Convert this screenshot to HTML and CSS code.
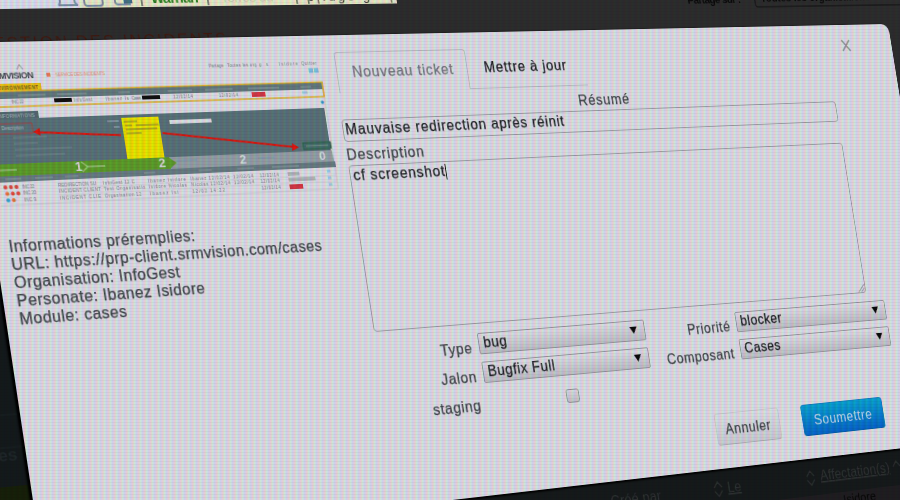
FILE: index.html
```
<!DOCTYPE html>
<html lang="fr">
<head>
<meta charset="utf-8">
<title>Nouveau ticket</title>
<link rel="stylesheet" href="styles.css">
</head>
<body>
<div class="scene">
  <div class="plane">
    <svg class="backdrop" viewBox="-120 -120 1320 760" aria-hidden="true">
      <rect x="-120" y="-120" width="590" height="87" fill="#e2e5f0"/>
      <rect x="122" y="-120" width="348" height="87" fill="#eff0cc"/>
      <g fill="none" stroke="#7f93a8" stroke-width="2">
        <path d="M102 -47v7q0 3 -2 4h20q-3 -1 -3-4v-7"/>
        <path d="M127 -47v9q0 3 3 3h13q3 0 3-3v-9"/>
        <path d="M159 -47v8q0 3 3 3h13"/>
      </g>
      <rect x="168" y="-45" width="9" height="8" fill="#467487"/>
      <g class="strip">
        <text x="185" y="-37">|</text>
        <text x="197" y="-37" class="user" textLength="51">Warrian</text>
        <text x="256" y="-37">|</text>
        <text x="272" y="-37" class="faint" textLength="58">Terres du</text>
        <text x="354" y="-37" textLength="112">| p|.ugo g...|</text>
      </g>
      <text class="heading" x="13" y="7" textLength="258">GESTION DES INCIDENTS</text>
      <text class="share" x="830" y="-28" textLength="71">Partage sur :</text>
      <path d="M920 -60V-26q0 3 3 3H1200" fill="none" stroke="#191919" stroke-width="1.5"/>
      <text class="share" x="928" y="-29" textLength="152">Toutes les organisations</text>
      <rect x="-120" y="180" width="1320" height="258" fill="#141a1c"/>
      <rect x="-120" y="438" width="1320" height="202" fill="#172009"/>
      <rect x="50" y="480" width="1150" height="62" fill="#161a1b"/>
      <rect x="50" y="542" width="1150" height="100" fill="#201e21"/>
      <path d="M-120 368H0M-120 400H0" stroke="#1b2224"/>
      <text class="ghost" x="-34" y="413">res</text>
      <g class="columns">
        <text x="632" y="527" textLength="63">Créé par</text>
        <text x="781" y="527" text-decoration="underline">Le</text>
        <text x="905" y="526" textLength="96" text-decoration="underline">Affectation(s)</text>
        <path d="M764 520l5-6 5 6M764 524l5 6 5-6M887 520l5-6 5 6M887 524l5 6 5-6M1006 520l5-6 5 6" fill="none" stroke="#2c3030" stroke-width="1.5"/>
      </g>
      <text class="owner" x="931" y="556">Isidore</text>
    </svg>

    <section class="dialog">
      <aside class="context">
        <svg class="capture" viewBox="12 10 368 165">
          <path d="M370 66V163H12" fill="none" stroke="#cfd0d5"/>
          <text x="23" y="37" class="brand" textLength="41">RMVISION</text>
          <path d="M48 28l3-5 3 5" fill="none" stroke="#999" stroke-width="1"/>
          <rect x="77" y="32" width="4" height="4" fill="#e8825c"/>
          <text x="86" y="36" class="tiny orange" textLength="51">SERVICE DES INCIDENTS</text>
          <g class="tiny">
            <text x="248" y="31" textLength="16">Partage</text>
            <text x="268" y="31" textLength="32">Toutes les org</text>
            <text x="303" y="31" textLength="10">g  s</text>
            <text x="325" y="31" textLength="21">Isidore</text>
            <text x="350" y="31" textLength="17">Quitter</text>
          </g>
          <path d="M357 37h5M363 37h5" stroke="#82c8de" stroke-width="5"/>
          <rect x="12" y="42" width="58" height="7.500" fill="#f2c615"/>
          <text x="22" y="48" class="tiny dark" textLength="45">ENVIRONNEMENT</text>
          <rect x="12" y="50" width="358" height="7" fill="#667c80"/>
          <path d="M45 54h28M85 54h30M148 54h12M200 54h26M240 54h30M287 54h34M345 54h12" stroke="#839698" stroke-width="1.500"/>
          <path d="M12 49.500H370V65H12" fill="none" stroke="#e1b733" stroke-width="1.700"/>
          <g class="tiny">
            <text x="38" y="62" textLength="12">INC 22</text>
            <text x="101" y="62" textLength="19">InfoGest</text>
            <text x="134" y="62" textLength="24">Ibanez Is</text>
            <text x="161" y="62" textLength="10">Cases</text>
            <text x="205" y="62" textLength="21">12/02/14</text>
            <text x="254" y="62" textLength="21">12/02/14</text>
          </g>
          <rect x="81" y="58" width="18" height="4" fill="#101010"/>
          <rect x="172" y="58" width="19" height="4" fill="#101010"/>
          <rect x="290" y="58" width="15" height="5" fill="#d93847"/>
          <path d="M346 60h6" stroke="#a6d2e2" stroke-width="3"/>
          <circle cx="367" cy="71" r="1.800" fill="#319cc2"/>

          <rect x="12" y="70" width="51" height="9" fill="#566d73"/>
          <rect x="12" y="77" width="356" height="45" fill="#5c757b"/>
          <text x="22" y="76" class="tiny pale" textLength="37">INFORMATIONS</text>
          <text x="24" y="88" class="tiny pale" textLength="22">Description</text>
          <path d="M12 82H55V92H12" fill="none" stroke="#a3474a" stroke-width="1"/>
          <path d="M34 96h34M34 102h24M34 108h58M34 114h50" stroke="#6e858b" stroke-width="1.500"/>
          <path d="M132 83h12M138 89h6" stroke="#8095a0" stroke-width="2"/>
          <rect x="197" y="84" width="45" height="4" fill="#e2e5e7"/>
          <rect x="147" y="80" width="39" height="43" fill="#f0ea00"/>
          <path d="M149 84h14M150 88h7M161 88h24M150 92h33M150 96h16" stroke="#aaa622" stroke-width="1.400"/>
          <rect x="338" y="113" width="31" height="7" fill="#45706b" stroke="#2b6448" stroke-width="1"/>
          <path d="M341 116.500h25" stroke="#6a8c85" stroke-width="1.500"/>

          <rect x="12" y="122" width="180" height="12" fill="#60a02b"/>
          <path d="M191 122H369L370 134H191Z" fill="#98a4a9"/>
          <path d="M190 122l8 6-8 6z" fill="#60a02b"/>
          <path d="M15 128h18M105 128h18" stroke="#8dbd69" stroke-width="2"/>
          <path d="M198 126h22M286 127h18" stroke="#8c9fab" stroke-width="2"/>
          <path d="M99 123l6 5-6 5" fill="none" stroke="#9dcc79" stroke-width="1.500"/>
          <g class="step">
            <text x="92" y="132.500">1</text>
            <text x="179" y="132.500">2</text>
            <text x="266" y="132.500">2</text>
            <text x="354" y="132.500">0</text>
          </g>
          <rect x="12" y="134" width="359" height="6" fill="#6b7f85"/>
          <path d="M20 137h16M50 137h18M80 137h14M162 137h12M220 137h14M262 137h18M300 137h30" stroke="#84979a" stroke-width="1.400"/>
          <g fill="#e04c3e">
            <circle cx="19" cy="145" r="2"/><circle cx="24.500" cy="145" r="2"/><circle cx="30" cy="145" r="2"/>
            <circle cx="20" cy="151.500" r="2" fill="#e9743e"/><circle cx="25.500" cy="151.500" r="2"/><circle cx="31" cy="151.500" r="2"/>
            <circle cx="20" cy="158" r="2" fill="#36a4dc"/><circle cx="25.500" cy="158" r="2" fill="#e9743e"/>
          </g>
          <g class="tiny">
            <text x="36" y="147" textLength="12">INC 22</text><text x="36" y="153.500" textLength="13">INC 20</text><text x="36" y="160" textLength="12">INC 9</text>
            <text x="72" y="147" textLength="39">REDIRECTION SU</text><text x="72" y="153.500" textLength="43">INCIDENT CLIENT</text><text x="72" y="160" textLength="42">INCIDENT CLIE</text>
            <text x="118" y="147" textLength="33">InfoGest 12 C</text><text x="118" y="153.500" textLength="43">Test Organisatio</text><text x="118" y="160" textLength="38">Organisation 12</text>
            <text x="165" y="147" textLength="40">Ibanez Isidore</text><text x="165" y="153.500" textLength="40">Isidore Nicolas</text><text x="165" y="160" textLength="30">Ibanez Isi</text>
            <text x="210" y="147" textLength="42">Ibanez 12/02/14</text><text x="210" y="153.500" textLength="42">Nicolas 12/02/14</text><text x="210" y="160" textLength="35">12/02 14:22</text>
            <text x="256" y="147" textLength="22">12/02/14</text><text x="256" y="153.500" textLength="22">12/02/14</text>
            <text x="285" y="147" textLength="21">12/02/14</text><text x="285" y="153.500" textLength="21">12/02/14</text><text x="285" y="160" textLength="21">12/02/14</text>
          </g>
          <path d="M72 148.500H370M72 155H370" stroke="#cfd1d5" stroke-width=".6"/>
          <rect x="316" y="143" width="13" height="4" fill="#b6babd"/>
          <rect x="316" y="149" width="30" height="4" fill="#b6babd"/>
          <rect x="316" y="156" width="15" height="5" fill="#d93847"/>
          <path d="M360 144h4M360 151h4M360 158h4" stroke="#9fd4e8" stroke-width="3"/>
          <path d="M144 97.500L60 91.500M188 97L328 117" stroke="#e3170f" stroke-width="2"/>
          <path d="M55 91l7-4v8zM333 117.500l-7-4.500-1 8z" fill="#e3170f"/>
        </svg>
        <p class="info">Informations préremplies:<br>URL: https://prp-client.srmvision.com/cases<br>Organisation: InfoGest<br>Personate: Ibanez Isidore<br>Module: cases</p>
      </aside>

      <div class="form">
        <nav class="tabs">
          <span class="tab tab-current">Nouveau ticket</span>
          <span class="tab">Mettre à jour</span>
        </nav>
        <div class="label-summary">Résumé</div>
        <div class="input">Mauvaise redirection après réinit</div>
        <div class="label-description">Description</div>
        <div class="textarea">cf screenshot<i class="caret"></i>
          <svg class="grip" viewBox="0 0 10 10"><path d="M1 9.500L9.500 1M5 9.500L9.500 5" stroke="#777" fill="none"/></svg>
        </div>
        <div class="fields">
          <span class="label">Type</span>
          <div class="select">bug<svg class="arrow" viewBox="0 0 9 8"><path d="M0 0h9L4.500 8z"/></svg></div>
          <span class="label">Priorité</span>
          <div class="select">blocker<svg class="arrow" viewBox="0 0 9 8"><path d="M0 0h9L4.500 8z"/></svg></div>
          <span class="label">Jalon</span>
          <div class="select">Bugfix Full<svg class="arrow" viewBox="0 0 9 8"><path d="M0 0h9L4.500 8z"/></svg></div>
          <span class="label">Composant</span>
          <div class="select">Cases<svg class="arrow" viewBox="0 0 9 8"><path d="M0 0h9L4.500 8z"/></svg></div>
          <span class="label">staging</span>
          <div class="check"><span class="checkbox"></span></div>
        </div>
        <div class="actions">
          <span class="button">Annuler</span>
          <span class="button button-primary">Soumettre</span>
        </div>
      </div>
      <svg class="close" viewBox="0 0 12 14"><path d="M1 1l10 12M11 1L1 13" stroke="#999" stroke-width="1.800"/></svg>
    </section>
  </div>
  <div class="mask"></div>
</div>
</body>
</html>
```
FILE: styles.css
```
* { box-sizing: border-box; }

body { margin: 0; background: #2a2a2a; }

.scene {
  position: relative;
  width: 900px;
  height: 500px;
  overflow: hidden;
  background: #2e2e2e;
  font: 16px/19px "Liberation Sans", Arial, sans-serif;
  letter-spacing: .9px;
  color: #44484d;
}

/* The whole interface lies on one plane seen in perspective. */
.plane {
  position: relative;
  width: 1100px;
  height: 500px;
  transform-origin: 0 0;
  transform: matrix3d(
    1.00573, -.012509, 0, .00018715,
    .1504, 1.0018, 0, -.0000142,
    0, 0, 1, 0,
    -35.5, 42.7, 0, 1);
  filter: blur(.5px);
}

.backdrop {
  position: absolute;
  left: -120px;
  top: -120px;
  width: 1320px;
  height: 760px;
  letter-spacing: 0;
}
.strip { font-size: 15px; fill: #45463f; }
.strip .user { font-weight: bold; fill: #2d8420; }
.strip .faint { fill: #cfd1b2; }
.heading { font-size: 17px; fill: #43190f; }
.share { font-size: 13px; fill: #090909; font-weight: bold; }
.ghost { font-size: 17px; font-weight: bold; fill: #20282a; }
.columns { font-size: 16px; fill: #303434; }
.owner { font-size: 15px; fill: #070707; }

.dialog {
  position: relative;
  display: grid;
  grid-template-columns: 373px 646px;
  width: 1100px;
  height: 500px;
  padding-left: 12px;
  border-radius: 10px;
  background: #e4e4e9;
  box-shadow: -2px 1px 2px 1px #000;
  -webkit-text-stroke: .25px currentColor;
}

.capture { display: block; width: 368px; height: 165px; margin-top: 10px; -webkit-text-stroke: 0; }
.brand { font-size: 9px; font-weight: bold; fill: #444950; letter-spacing: 0; }
.tiny { font-size: 4.5px; fill: #80848a; letter-spacing: 0; }
.orange { fill: #e69a80; }
.dark { fill: #75641b; font-weight: bold; }
.pale { fill: #b3c0c4; }
.step { font-size: 13px; font-weight: bold; fill: #dbe2e2; letter-spacing: 0; }
.info { margin: 19.5px 0 0 1.5px; line-height: 18px; letter-spacing: .48px; white-space: nowrap; }

.tabs { display: flex; height: 44px; margin-top: 17.5px; margin-left: 3px; }
.tab {
  width: 144px;
  padding: 11px 0 0 20px;
  border-bottom: 1px solid #c0c2c7;
  white-space: nowrap;
  color: #1c1e22;
}
.tab-current {
  width: 153px;
  padding: 11px 0 0 17px;
  border: 1px solid #c0c2c7;
  border-bottom: 0;
  border-radius: 4px 4px 0 0;
  color: #777a80;
}

.label-summary { width: 635px; height: 28px; padding-top: 5px; line-height: 23px; text-align: center; }
.input {
  width: 623px;
  height: 24px;
  padding-left: 2px;
  border: 1.5px solid #a2a3a8;
  border-radius: 4px;
  line-height: 20px;
  color: #1f2125;
}
.label-description { height: 25.5px; padding-top: 4.5px; }
.textarea {
  position: relative;
  width: 623px;
  height: 177px;
  padding-left: 3px;
  border: 1.5px solid #a2a3a8;
  border-radius: 4px;
  color: #1f2125;
}
.caret { display: inline-block; width: 1px; height: 17px; background: #111; vertical-align: -4px; }
.grip { position: absolute; right: 0; bottom: 0; width: 10px; height: 10px; }

.fields {
  display: grid;
  grid-template-columns: 110px 205px 102px 205px;
  grid-auto-rows: 23px;
  gap: 8px;
  margin-top: 10px;
}
.label { padding-top: 4px; line-height: 23px; text-align: right; letter-spacing: .7px; }
.select {
  display: flex;
  justify-content: space-between;
  padding: 0 9px 0 5px;
  border: 1.5px solid #9c9ca1;
  border-radius: 2px;
  background: linear-gradient(#e6e6ea, #c6c6cb);
  line-height: 19px;
  letter-spacing: .6px;
  color: #1f2125;
}
.arrow { width: 9px; height: 8px; margin-top: 5.5px; fill: #0a0a0a; }
.check { display: flex; justify-content: center; padding-top: 7px; }
.checkbox {
  width: 16px;
  height: 15px;
  border: 1.5px solid #98989d;
  border-radius: 3px;
  background: linear-gradient(#e2e2e6, #cacace);
}

.actions { display: flex; justify-content: flex-end; gap: 30px; width: 620px; margin-top: 27px; }
.button {
  width: 85px;
  height: 36px;
  border: 1px solid #d0d1d5;
  border-bottom-color: #b4b5ba;
  border-radius: 4px;
  background: linear-gradient(#e5e6ea, #d2d3d8);
  line-height: 35px;
  text-align: center;
  letter-spacing: .7px;
}
.button-primary {
  width: 112px;
  border-color: #1685c4 #1685c4 #0763ad;
  background: linear-gradient(#0aa6d4, #0769cc);
  color: #c8dfef;
  -webkit-text-stroke: 0;
}
.close { position: absolute; left: 1029px; top: 17px; width: 13px; height: 15px; }

/* Coloured subpixel columns and scanlines of the display. */
.mask {
  position: absolute;
  inset: 0;
  mix-blend-mode: multiply;
  background:
    repeating-linear-gradient(#0000 0 2px, #0000000a 2px 3px),
    repeating-linear-gradient(90deg, #ffe4ec 0 1px, #f7f1e4 1px 2px, #e6ffec 2px 3px, #e4f6fa 3px 4px, #e6eaff 4px 5px, #f4e4fb 5px 6px);
}
```
